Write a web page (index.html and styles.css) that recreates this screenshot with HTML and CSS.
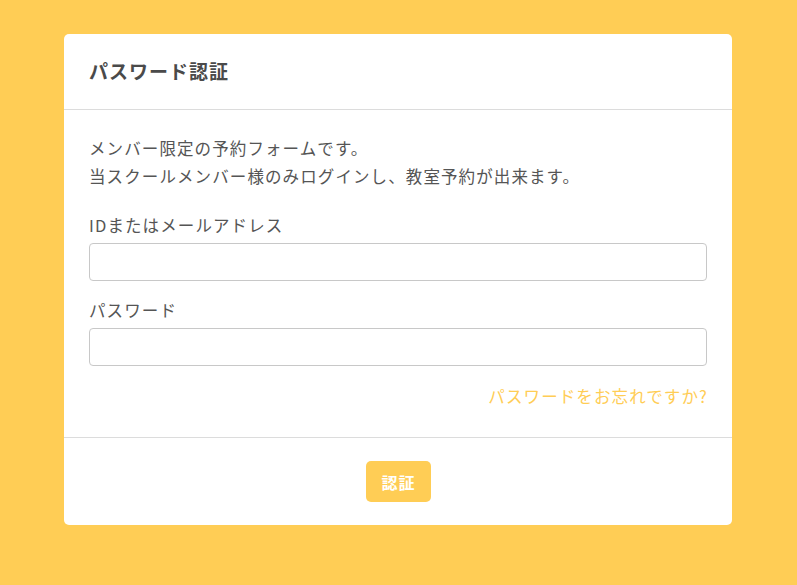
FILE: index.html
```html
<!DOCTYPE html>
<html lang="ja">
<head>
<meta charset="utf-8">
<link rel="stylesheet" href="styles.css">
</head>
<body>
<div class="page">
  <div class="card">
    <div class="card-header">
      <h1 class="title">パスワード認証</h1>
    </div>
    <div class="card-body">
      <p class="intro">メンバー限定の予約フォームです。<br>当スクールメンバー様のみログインし、教室予約が出来ます。</p>
      <label class="label">IDまたはメールアドレス</label>
      <input class="input" type="text">
      <label class="label label-2">パスワード</label>
      <input class="input" type="password">
      <div class="forgot"><a href="#" class="forgot-link">パスワードをお忘れですか?</a></div>
    </div>
    <div class="card-footer">
      <button class="btn" type="button">認証</button>
    </div>
  </div>
</div>
</body>
</html>
```
FILE: styles.css
```css
* { box-sizing: border-box; }
html, body { margin: 0; padding: 0; }
body {
  background: #ffcd55;
  font-family: "Noto Sans CJK JP", "Noto Sans", sans-serif;
  color: #555;
  width: 797px;
  height: 585px;
}
.page {
  padding: 34px 65px 0 64px;
}
.card {
  width: 668px;
  height: 491px;
  background: #fff;
  border-radius: 5px;
  display: flex;
  flex-direction: column;
}
.card-header {
  height: 76px;
  flex: none;
  border-bottom: 1px solid #dcdcdc;
  padding: 0 25px;
  display: flex;
  align-items: center;
}
.title {
  margin: 0;
  font-size: 19px;
  letter-spacing: 1px;
  font-weight: 700;
  color: #4a4a4a;
  line-height: 27px;
  padding-bottom: 2px;
}
.card-body {
  padding: 24px 25px 29px 25px;
  display: flex;
  flex-direction: column;
  border-bottom: 1px solid #dcdcdc;
}
.intro {
  margin: 0;
  font-size: 16.5px;
  letter-spacing: 1.1px;
  line-height: 28px;
}
.label {
  display: block;
  font-size: 16.5px;
  letter-spacing: 1.1px;
  line-height: 24px;
  margin-top: 23px;
}
.label-2 { margin-top: 17px; }
.input {
  margin-top: 6px;
  width: 618px;
  height: 38px;
  border: 1px solid #c8c8c8;
  border-radius: 4px;
  background: #fff;
  outline: none;
}
.forgot {
  margin-top: 18px;
  text-align: right;
  line-height: 24px;
  font-size: 16.5px;
  letter-spacing: 1.1px;
}
.forgot-link {
  color: #ffcd55;
  text-decoration: none;
  margin-right: -1px;
}
.card-footer {
  flex: 1;
  display: flex;
  justify-content: center;
  padding-top: 23px;
}
.btn {
  width: 65px;
  height: 41px;
  border: none;
  border-radius: 5px;
  background: #ffcd55;
  color: #fff;
  font-family: inherit;
  font-size: 16px;
  letter-spacing: 1px;
  font-weight: 700;
  padding: 0 0 0 1px;
}
```
